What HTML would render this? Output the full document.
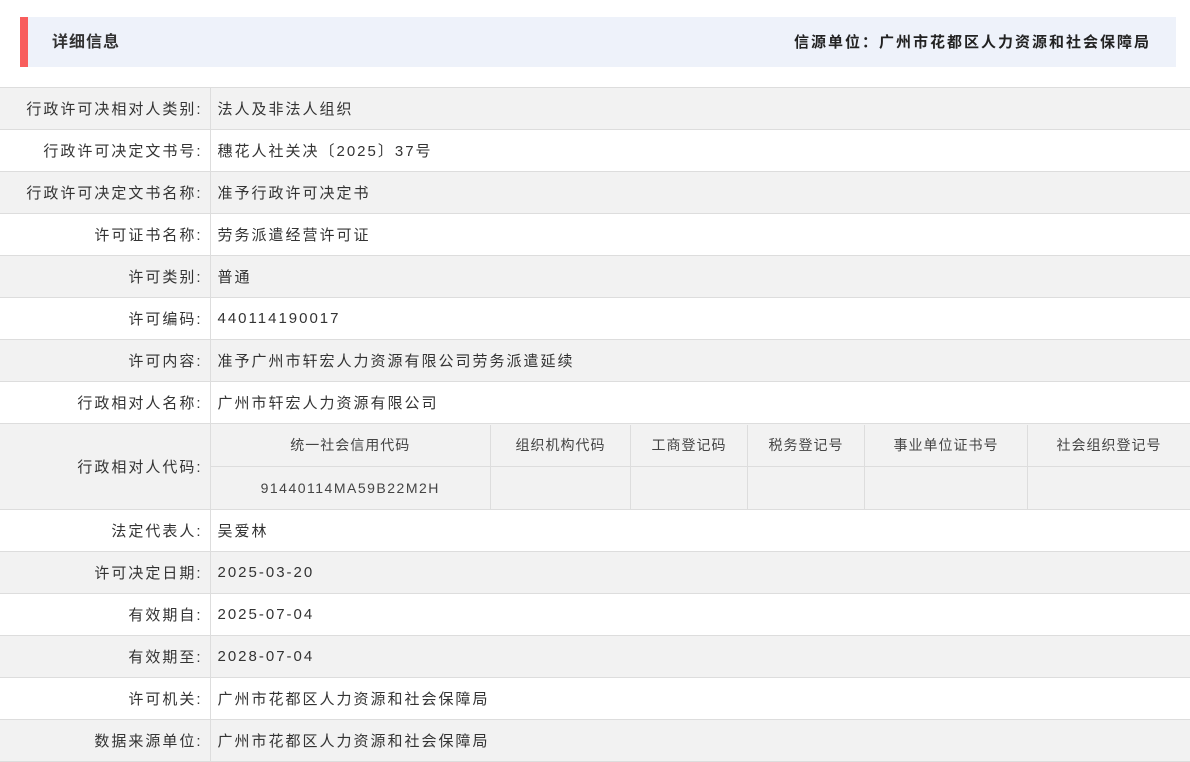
<!DOCTYPE html>
<html><head><meta charset="utf-8"><style>
*{margin:0;padding:0;box-sizing:border-box}
body{width:1190px;height:760px;overflow:hidden;background:#fff;font-family:"Liberation Sans","Noto Sans CJK SC",sans-serif;color:#333;font-size:15px}
.hd{position:absolute;left:20px;top:17px;width:1156px;height:50px;background:#eef2fa;border-left:8px solid #f85d5d}
.hd .l{position:absolute;left:24px;top:1px;line-height:50px;font-weight:bold;font-size:16px;color:#333;letter-spacing:1px}
.hd .r{position:absolute;right:25px;top:1px;line-height:50px;font-weight:bold;font-size:15px;color:#222;letter-spacing:2px}
table.m{position:absolute;left:0;top:87px;width:1190px;border-collapse:collapse}
table.m>tbody>tr>td{border:1px solid #ddd;height:42px;padding:0;letter-spacing:2px}
table.m>tbody>tr:nth-child(odd)>td{background:#f2f2f2}
td.k{width:210px;text-align:right;padding-right:7px!important;border-left:none!important}
td.v{padding-left:7px!important;border-right:none!important}
table.s{width:100%;border-collapse:collapse;font-size:14px;color:#444;text-align:center}
table.s td{border:1px solid #ddd;height:42px;background:#f2f2f2;letter-spacing:1px}
table.s tr:first-child td{border-top:none}
table.s tr:last-child td{border-bottom:none}
table.s td:first-child{border-left:none}
table.s td:last-child{border-right:none}
</style></head><body>
<div class="hd"><div class="l">详细信息</div><div class="r">信源单位：广州市花都区人力资源和社会保障局</div></div>
<table class="m"><tbody>
<tr><td class="k">行政许可决相对人类别:</td><td class="v">法人及非法人组织</td></tr>
<tr><td class="k">行政许可决定文书号:</td><td class="v">穗花人社关决〔2025〕37号</td></tr>
<tr><td class="k">行政许可决定文书名称:</td><td class="v">准予行政许可决定书</td></tr>
<tr><td class="k">许可证书名称:</td><td class="v">劳务派遣经营许可证</td></tr>
<tr><td class="k">许可类别:</td><td class="v">普通</td></tr>
<tr><td class="k">许可编码:</td><td class="v">440114190017</td></tr>
<tr><td class="k">许可内容:</td><td class="v">准予广州市轩宏人力资源有限公司劳务派遣延续</td></tr>
<tr><td class="k">行政相对人名称:</td><td class="v">广州市轩宏人力资源有限公司</td></tr>
<tr><td class="k" style="height:86px">行政相对人代码:</td><td style="padding:0;border-right:none">
<table class="s"><tr><td style="width:280px">统一社会信用代码</td><td style="width:140px">组织机构代码</td><td style="width:117px">工商登记码</td><td style="width:117px">税务登记号</td><td style="width:163px">事业单位证书号</td><td>社会组织登记号</td></tr>
<tr><td style="letter-spacing:1.5px">91440114MA59B22M2H</td><td></td><td></td><td></td><td></td><td></td></tr></table>
</td></tr>
<tr><td class="k">法定代表人:</td><td class="v">吴爱林</td></tr>
<tr><td class="k">许可决定日期:</td><td class="v">2025-03-20</td></tr>
<tr><td class="k">有效期自:</td><td class="v">2025-07-04</td></tr>
<tr><td class="k">有效期至:</td><td class="v">2028-07-04</td></tr>
<tr><td class="k">许可机关:</td><td class="v">广州市花都区人力资源和社会保障局</td></tr>
<tr><td class="k">数据来源单位:</td><td class="v">广州市花都区人力资源和社会保障局</td></tr>
</tbody></table>
</body></html>
